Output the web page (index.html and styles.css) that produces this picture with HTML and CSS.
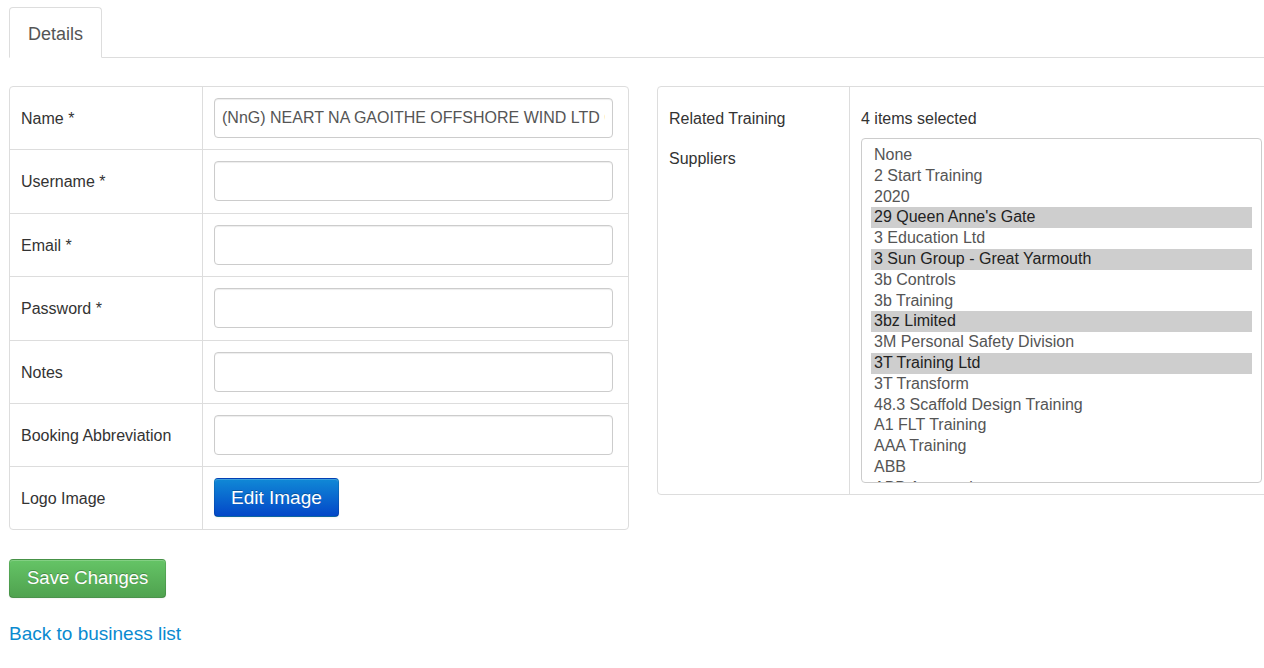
FILE: index.html
```html
<!DOCTYPE html>
<html lang="en">
<head>
    <meta charset="UTF-8">
    <meta name="viewport" content="width=device-width, initial-scale=1.0">
    <title>Edit Business</title>
    <link rel="stylesheet" href="styles.css">
</head>
<body>
    <ul class="tabs">
        <li class="tab active">Details</li>
    </ul>

    <div class="form-row">
        <!-- Main business details -->
        <table class="details">
            <tr>
                <td class="label">Name *</td>
                <td><input type="text" value="(NnG) NEART NA GAOITHE OFFSHORE WIND LTD CO"></td>
            </tr>
            <tr>
                <td class="label">Username *</td>
                <td><input type="text"></td>
            </tr>
            <tr>
                <td class="label">Email *</td>
                <td><input type="text"></td>
            </tr>
            <tr>
                <td class="label">Password *</td>
                <td><input type="password"></td>
            </tr>
            <tr>
                <td class="label">Notes</td>
                <td><input type="text"></td>
            </tr>
            <tr>
                <td class="label">Booking Abbreviation</td>
                <td><input type="text"></td>
            </tr>
            <tr>
                <td class="label">Logo Image</td>
                <td><button class="btn btn-primary" type="button">Edit Image</button></td>
            </tr>
        </table>

        <!-- Related training / suppliers -->
        <div class="related">
            <div class="related-labels">
                <p>Related Training</p>
                <p>Suppliers</p>
            </div>
            <div class="related-values">
                <p class="selected-count">4 items selected</p>
                <div class="listbox">
                    <div class="option">None</div>
                    <div class="option">2 Start Training</div>
                    <div class="option">2020</div>
                    <div class="option selected">29 Queen Anne's Gate</div>
                    <div class="option">3 Education Ltd</div>
                    <div class="option selected">3 Sun Group - Great Yarmouth</div>
                    <div class="option">3b Controls</div>
                    <div class="option">3b Training</div>
                    <div class="option selected">3bz Limited</div>
                    <div class="option">3M Personal Safety Division</div>
                    <div class="option selected">3T Training Ltd</div>
                    <div class="option">3T Transform</div>
                    <div class="option">48.3 Scaffold Design Training</div>
                    <div class="option">A1 FLT Training</div>
                    <div class="option">AAA Training</div>
                    <div class="option">ABB</div>
                    <div class="option">ABB Automation</div>
                    <div class="option">Acorn Training</div>
                </div>
            </div>
        </div>
    </div>

    <button class="btn btn-success" type="button">Save Changes</button>

    <a class="back-link" href="#">Back to business list</a>
</body>
</html>
```

FILE: styles.css
```css
* {
    margin: 0;
    padding: 0;
    box-sizing: border-box;
}

html,
body {
    overflow: hidden;
}

body {
    font-family: 'Liberation Sans', Arial, sans-serif;
    font-size: 16px;
    line-height: 20px;
    color: #333;
    background: #fff;
    padding: 7px 0 0 9px;
    width: 1290px;
}

/* Tabs */
.tabs {
    list-style: none;
    display: flex;
    border-bottom: 1px solid #ddd;
    width: 1266px;
}

.tab {
    font-size: 18px;
    line-height: 20px;
    color: #555;
    padding: 16px 18px 13px;
    border: 1px solid transparent;
    border-radius: 4px 4px 0 0;
    margin-bottom: -1px;
}

.tab.active {
    background: #fff;
    border-color: #ddd;
    border-bottom-color: #fff;
}

/* Two panels side by side */
.form-row {
    display: flex;
    align-items: flex-start;
    gap: 28px;
    margin-top: 28px;
}

.details {
    width: 620px;
    flex-shrink: 0;
    border: 1px solid #ddd;
    border-radius: 4px;
    border-collapse: separate;
    border-spacing: 0;
}

.details td {
    padding: 11px 11px 11.4px;
    border-top: 1px solid #ddd;
    vertical-align: middle;
}

.details td.label {
    width: 193px;
    border-right: 1px solid #ddd;
    padding-top: 12px;
    padding-bottom: 10.4px;
}

.details tr:first-child td {
    border-top: none;
}

.details input {
    display: block;
    width: 399px;
    height: 40px;
    padding: 0 7px;
    font-family: inherit;
    font-size: 16px;
    color: #555;
    border: 1px solid #ccc;
    border-radius: 4px;
    box-shadow: inset 0 1px 1px rgba(0, 0, 0, 0.075);
    background: #fff;
}

/* Buttons */
.btn {
    display: block;
    font-family: inherit;
    height: 39px;
    padding: 0 16px;
    color: #fff;
    border: 1px solid rgba(0, 0, 0, 0.1);
    border-bottom-color: rgba(0, 0, 0, 0.25);
    border-radius: 4px;
    text-shadow: 0 -1px 0 rgba(0, 0, 0, 0.25);
    box-shadow: inset 0 1px 0 rgba(255, 255, 255, 0.2), 0 1px 2px rgba(0, 0, 0, 0.05);
    cursor: pointer;
}

.btn-primary {
    font-size: 19px;
    background: linear-gradient(to bottom, #1089d6, #0347c8);
}

.btn-success {
    font-size: 18.5px;
    padding: 0 17px;
    margin-top: 29px;
    background: linear-gradient(to bottom, #65c466, #4fa24f);
}

.back-link {
    display: inline-block;
    margin-top: 25px;
    font-size: 19px;
    line-height: 22px;
    color: #0a8ad0;
    text-decoration: none;
}

/* Related panel */
.related {
    flex-shrink: 0;
    width: 619px;
    display: flex;
    border: 1px solid #ddd;
    border-radius: 4px;
}

.related-labels {
    width: 192px;
    border-right: 1px solid #ddd;
    padding: 22px 11px;
}

.related-labels p + p {
    margin-top: 20px;
}

.related-values {
    flex: 1;
    padding: 22px 12px 11px 11px;
}

.selected-count {
    margin-bottom: 9px;
}

.listbox {
    width: 401px;
    height: 345px;
    border: 1px solid #ccc;
    border-radius: 4px;
    padding: 6px 9px 5px;
    overflow: hidden;
}

.option {
    height: 20.8px;
    line-height: 20.8px;
    padding: 0 3px;
    color: #555;
    white-space: nowrap;
}

.option.selected {
    background: #cecece;
    color: #222;
}
```
